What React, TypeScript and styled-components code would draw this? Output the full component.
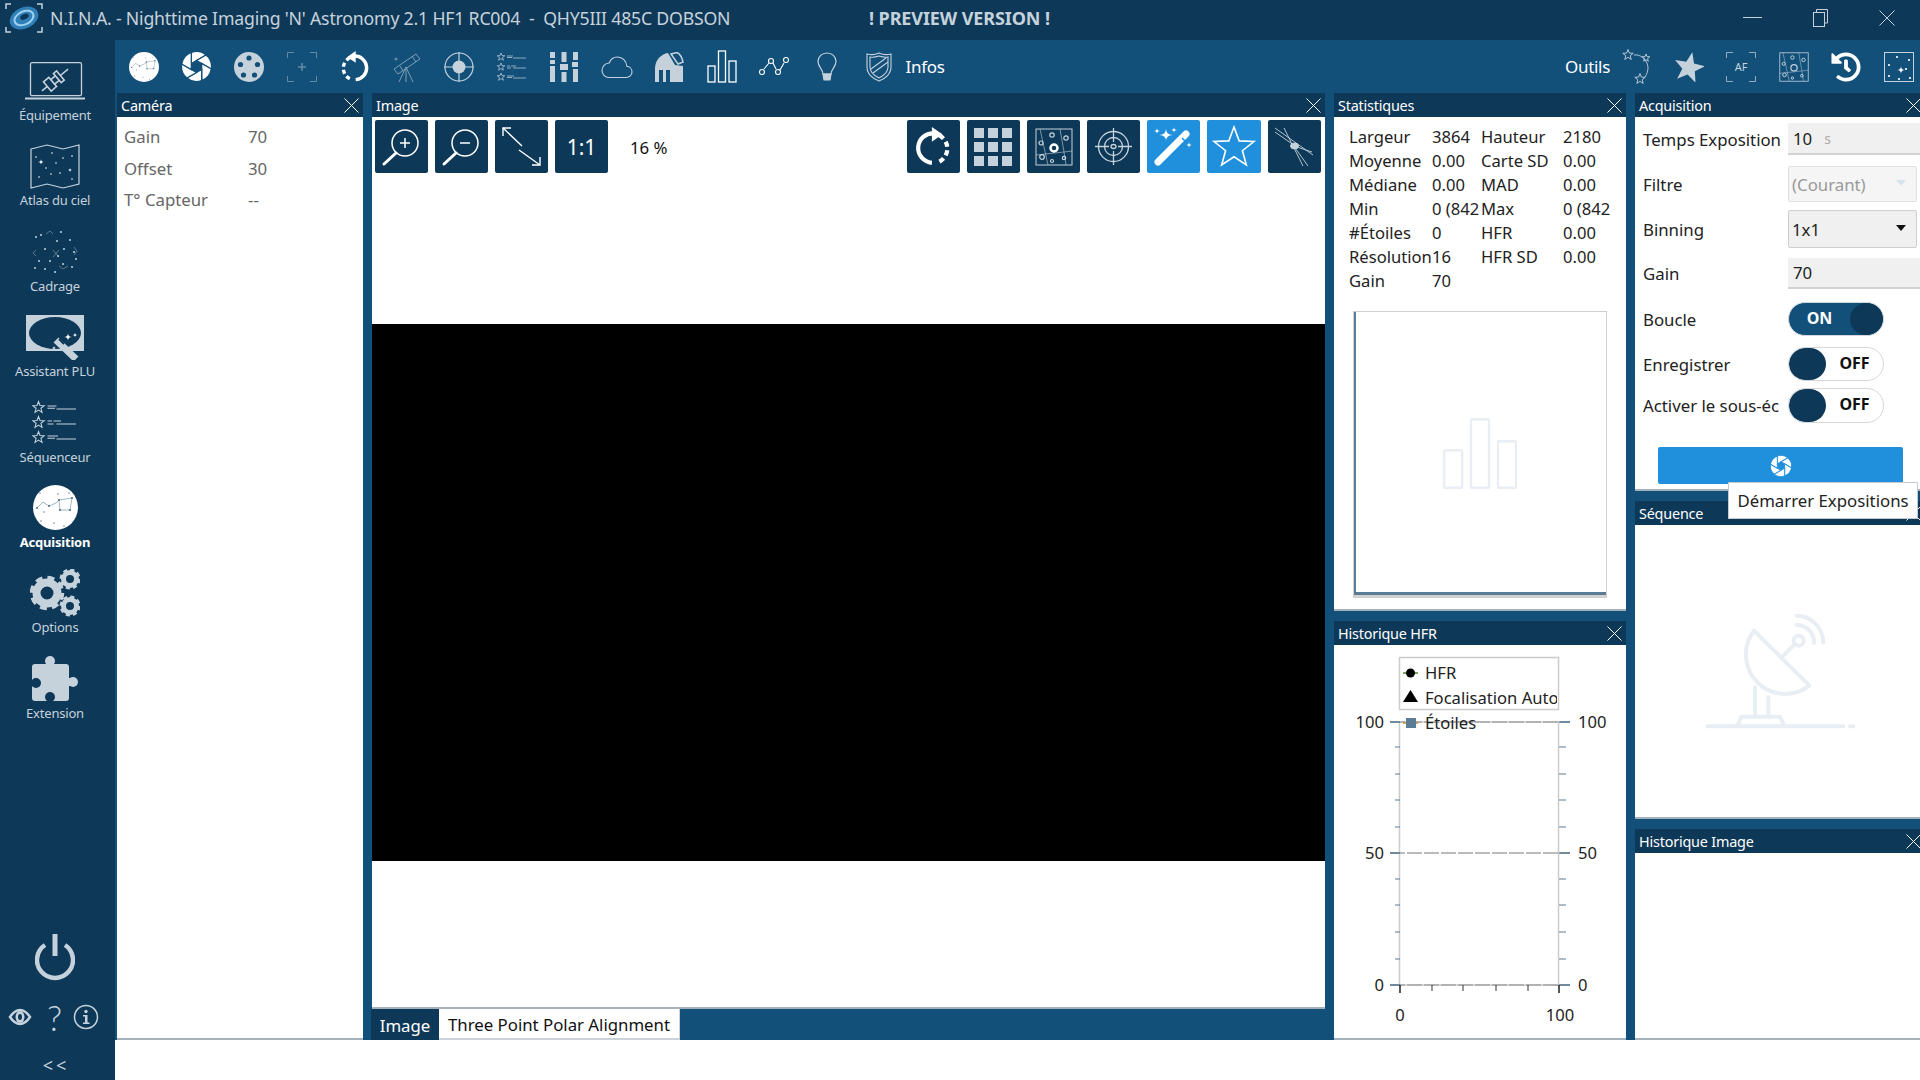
import React from 'react';
import styled, { createGlobalStyle } from 'styled-components';
import { FaHistory } from 'react-icons/fa';

const DARK = '#0e3857';
const MID = '#12507a';
const ACTIVE = '#2090dd';
const ICON = '#c5d2dc';
const FAINT = '#e8eef3';

const GlobalStyle = createGlobalStyle`
  html, body {
    margin: 0;
    padding: 0;
    background: #fff;
    overflow: hidden;
  }
  * {
    box-sizing: border-box;
  }
  body {
    font-family: "Noto Sans", "Open Sans", sans-serif;
  }
`;

const Page = styled.div`
  width: 1920px;
  height: 1080px;
  overflow: hidden;
  display: grid;
  grid-template-rows: 40px 1040px;
`;

const TitleBar = styled.header`
  background: ${DARK};
  display: flex;
  align-items: center;
  color: ${ICON};
  padding: 0 0 5px 5px;
`;

const AppTitle = styled.div`
  width: 819px;
  margin-left: 7px;
  font-size: 17.7px;
  white-space: pre;
  letter-spacing: -0.2px;
`;

const Preview = styled.div`
  font-size: 18px;
  font-weight: 700;
  letter-spacing: -0.1px;
`;

const WindowButtons = styled.div`
  margin-left: auto;
  display: flex;
  padding-right: 25px;
  gap: 51px;
  align-items: center;
`;

const Main = styled.div`
  display: grid;
  grid-template-columns: 115px 1805px;
`;

const Sidebar = styled.nav`
  background: ${DARK};
  padding: 18px 5px 0 0;
  display: flex;
  flex-direction: column;
  align-items: center;
`;

const NavItem = styled.div`
  height: 85.4px;
  width: 100%;
  display: flex;
  flex-direction: column;
  align-items: center;
`;

const NavIcon = styled.div`
  height: 46px;
  display: flex;
  align-items: center;
  justify-content: center;
  color: ${ICON};
`;

const NavLabel = styled.div<{ $active?: boolean }>`
  font-size: 13px;
  line-height: 20px;
  letter-spacing: -0.2px;
  padding-top: 1px;
  color: ${(p) => (p.$active ? '#fff' : ICON)};
  font-weight: ${(p) => (p.$active ? 700 : 400)};
`;

const SideBottom = styled.div`
  margin-top: auto;
  width: 100%;
  display: flex;
  flex-direction: column;
  align-items: center;
  color: ${ICON};
`;

const PowerWrap = styled.div`
  height: 48px;
  margin-bottom: 21px;
`;

const HelpRow = styled.div`
  display: flex;
  width: 110px;
  padding-left: 8px;
  align-items: center;
  height: 30px;
`;

const Question = styled.span`
  font-family: "Lato", "Noto Sans", sans-serif;
  font-size: 35px;
  line-height: 30px;
  font-weight: 300;
  margin: 0 11px 0 15px;
  color: ${ICON};
`;

const Collapse = styled.div`
  height: 29px;
  margin-top: 19px;
  padding-left: 2px;
  font-size: 18px;
  line-height: 28px;
  letter-spacing: 3px;
  color: ${ICON};
`;

const Workspace = styled.div`
  display: grid;
  grid-template-rows: 53px 947px 40px;
  background: ${MID};
`;

const Toolbar = styled.div`
  display: flex;
  align-items: center;
  padding-left: 3px;
  margin-right: -5px;
`;

const ToolButton = styled.div`
  width: 52.5px;
  height: 53px;
  flex: none;
  display: flex;
  align-items: center;
  justify-content: center;
  color: ${ICON};
`;

const ToolText = styled.span`
  color: #fff;
  font-size: 17px;
  letter-spacing: -0.3px;
`;

const Spacer = styled.div`
  flex: 1;
`;

const Dock = styled.div`
  display: flex;
  gap: 9px;
  padding-left: 2px;
  overflow: hidden;
`;

const DockStack = styled.div<{ $width: number }>`
  width: ${(p) => p.$width}px;
  flex: none;
  display: flex;
  flex-direction: column;
  gap: 10px;
`;

const Panel = styled.section<{ $height?: number; $width?: number }>`
  display: flex;
  flex-direction: column;
  flex: ${(p) => (p.$height || p.$width ? 'none' : '1')};
  height: ${(p) => (p.$height ? `${p.$height}px` : 'auto')};
  width: ${(p) => (p.$width ? `${p.$width}px` : 'auto')};
  min-height: 0;
`;

const PanelHeader = styled.div`
  height: 24px;
  flex: none;
  background: ${DARK};
  color: #fff;
  font-size: 14.4px;
  letter-spacing: -0.2px;
  display: flex;
  align-items: center;
  justify-content: space-between;
  padding: 0 4px 0 4px;
`;

const PanelBody = styled.div`
  flex: 1;
  min-height: 0;
  background: #fff;
  border-bottom: 2px solid #a3b2bd;
  position: relative;
  display: flex;
  flex-direction: column;
`;

const EmptyBody = styled(PanelBody)`
  align-items: center;
  justify-content: center;
`;

const CameraRow = styled.div`
  display: grid;
  grid-template-columns: 124px 1fr;
  height: 31.5px;
  align-items: center;
  padding-left: 7px;
  font-size: 16.8px;
  color: #666;
`;

const CameraList = styled.div`
  padding-top: 4px;
`;

const ImageTools = styled.div`
  height: 60px;
  flex: none;
  display: flex;
  align-items: flex-start;
  padding: 3px 4px 0 3px;
  gap: 7px;
`;

const ImageButton = styled.div<{ $active?: boolean; $width?: number }>`
  width: ${(p) => p.$width ?? 53}px;
  height: 53px;
  flex: none;
  border-radius: 2px;
  background: ${(p) => (p.$active ? ACTIVE : DARK)};
  display: flex;
  align-items: center;
  justify-content: center;
  color: #fff;
  font-size: 21px;
`;

const ZoomLevel = styled.div`
  margin-left: 15px;
  height: 53px;
  display: flex;
  align-items: center;
  font-size: 16.8px;
  color: #111;
  margin-top: 1px;
  white-space: nowrap;
`;

const ImageArea = styled.div`
  flex: 1;
  display: flex;
  align-items: center;
`;

const BlackFrame = styled.div`
  width: 100%;
  height: 537px;
  background: #000;
`;

const Tabs = styled.div`
  height: 31px;
  flex: none;
  display: flex;
  background: ${MID};
`;

const Tab = styled.div<{ $active?: boolean }>`
  width: ${(p) => (p.$active ? '68px' : '241px')};
  margin-left: ${(p) => (p.$active ? '-1px' : '0')};
  padding-top: 2px;
  display: flex;
  align-items: center;
  justify-content: center;
  white-space: nowrap;
  font-size: 16.8px;
  background: ${(p) => (p.$active ? DARK : '#fff')};
  color: ${(p) => (p.$active ? '#fff' : '#111')};
  border-bottom: ${(p) => (p.$active ? 'none' : '2px solid #ccd3d8')};
  border-right: ${(p) => (p.$active ? 'none' : '1px solid #ccd3d8')};
`;

const StatsGrid = styled.div`
  display: grid;
  grid-template-columns: 83px 49px 82px 49px;
  grid-auto-rows: 24px;
  padding: 8px 0 0 15px;
  font-size: 16.6px;
  color: #222;
  align-items: center;
`;

const StatCell = styled.div`
  white-space: nowrap;
  overflow: hidden;
  line-height: 24px;
`;

const HistogramBox = styled.div`
  margin: 18px 0 0 19px;
  width: 254px;
  height: 287px;
  border: 1.5px solid #d0d0d0;
  border-bottom-width: 3px;
  display: flex;
  align-items: center;
  justify-content: center;
  box-shadow: inset 2px -3px 0 #5a7c94;
`;

const AcquisitionForm = styled.div`
  padding-left: 8px;
`;

const FormRow = styled.div<{ $height: number; $top: number }>`
  display: grid;
  grid-template-columns: 145px 132px;
  align-items: center;
  height: ${(p) => p.$height}px;
  margin-top: ${(p) => p.$top}px;
  font-size: 16.8px;
  color: #222;
`;

const FormLabel = styled.div`
  white-space: nowrap;
  width: 137px;
`;

const TextField = styled.div`
  height: 100%;
  width: 140px;
  background: #f0f0f0;
  border-bottom: 2px solid #d2d2d2;
  display: flex;
  align-items: center;
  padding-left: 5px;
  gap: 12px;
`;

const Unit = styled.span`
  color: #aaa;
  font-size: 14px;
`;

const ComboBox = styled.div<{ $disabled?: boolean }>`
  height: 100%;
  width: 129px;
  background: ${(p) => (p.$disabled ? '#f5f5f5' : '#f0f0f0')};
  border: 1.5px solid ${(p) => (p.$disabled ? '#e0e0e0' : '#cfcfcf')};
  border-radius: 2px;
  display: flex;
  align-items: center;
  justify-content: space-between;
  padding: 0 10px 0 3px;
  color: ${(p) => (p.$disabled ? '#999' : '#222')};
`;

const ComboArrow = styled.span<{ $disabled?: boolean }>`
  width: 0;
  height: 0;
  border-left: 5.5px solid transparent;
  border-right: 5.5px solid transparent;
  border-top: 6px solid ${(p) => (p.$disabled ? '#d6e4ee' : '#111')};
  margin-bottom: 3px;
`;

const Toggle = styled.div<{ $on?: boolean }>`
  width: 96px;
  height: 100%;
  border-radius: 17px;
  background: ${(p) => (p.$on ? MID : '#fff')};
  border: 1.5px solid #d4d8db;
  display: flex;
  flex-direction: ${(p) => (p.$on ? 'row' : 'row-reverse')};
  align-items: stretch;
  justify-content: space-between;
  overflow: hidden;
`;

const ToggleKnob = styled.div<{ $on?: boolean }>`
  width: ${(p) => (p.$on ? 33 : 37)}px;
  background: ${DARK};
  border-radius: 17px;
`;

const ToggleText = styled.div<{ $on?: boolean }>`
  flex: 1;
  display: flex;
  align-items: center;
  justify-content: center;
  font-size: 16px;
  font-weight: 700;
  margin-bottom: 3px;
  color: ${(p) => (p.$on ? '#fff' : '#111')};
`;

const StartButton = styled.div`
  width: 245px;
  height: 37px;
  margin: 24px 0 0 15px;
  background: ${ACTIVE};
  border-radius: 2px;
  display: flex;
  align-items: center;
  justify-content: center;
`;

const Tooltip = styled.div`
  position: absolute;
  left: 93px;
  top: 365px;
  width: 190px;
  height: 37px;
  z-index: 3;
  background: #fff;
  border: 1.5px solid #c4ccd2;
  display: flex;
  align-items: center;
  justify-content: center;
  font-size: 16.8px;
  color: #222;
  white-space: nowrap;
`;

const BottomStrip = styled.div`
  background: #fff;
`;

const starPoints = (cx: number, cy: number, r: number): string => {
  const pts: string[] = [];
  for (let i = 0; i < 10; i++) {
    const rad = i % 2 === 0 ? r : r * 0.42;
    const a = (Math.PI / 5) * i - Math.PI / 2;
    pts.push(`${(cx + rad * Math.cos(a)).toFixed(2)},${(cy + rad * Math.sin(a)).toFixed(2)}`);
  }
  return pts.join(' ');
};

const sparkle = (cx: number, cy: number, r: number): string =>
  `M${cx} ${cy - r}Q${cx} ${cy} ${cx + r} ${cy}Q${cx} ${cy} ${cx} ${cy + r}Q${cx} ${cy} ${cx - r} ${cy}Q${cx} ${cy} ${cx} ${cy - r}Z`;

const CloseX = () => (
  <svg width="15" height="15" viewBox="0 0 15 15">
    <path d="M0.5 0.5L14.5 14.5M14.5 0.5L0.5 14.5" stroke="#fff" strokeWidth="1" />
  </svg>
);

const Logo = () => (
  <svg width="38" height="30" viewBox="0 0 38 30">
    <path d="M1 6V1H6M32 1H37V6M37 24V29H32M6 29H1V24" fill="none" stroke={ICON} strokeWidth="1.5" />
    <g transform="rotate(-25 19 15)">
      <ellipse cx="19" cy="15" rx="15" ry="10.5" fill="#2f7fb8" />
      <ellipse cx="19" cy="15" rx="10" ry="6.5" fill="none" stroke="#9fd0f0" strokeWidth="2" />
      <ellipse cx="20" cy="14" rx="4.5" ry="2.6" fill={DARK} />
    </g>
  </svg>
);

const SkyDisc = ({ size }: { size: number }) => (
  <svg width={size} height={size} viewBox="0 0 45 45">
    <circle cx="22.5" cy="22.5" r="22.5" fill="#fff" />
    <path d="M4 23L10 17L16 21L23 18L26 15L39 13M26 15L27 25L37 25L39 13" fill="none" stroke="#8aa3b5" strokeWidth="0.8" />
    <g fill="#4a6b84">
      <circle cx="7" cy="8" r="0.7" />
      <circle cx="25" cy="9" r="0.7" />
      <circle cx="36" cy="8" r="0.7" />
      <circle cx="11" cy="27" r="0.7" />
      <circle cx="8" cy="36" r="0.7" />
      <circle cx="21" cy="38" r="0.7" />
      <circle cx="31" cy="41" r="0.7" />
      <circle cx="4" cy="23" r="1" />
      <circle cx="16" cy="21" r="1" />
      <circle cx="26" cy="15" r="1" />
      <circle cx="39" cy="13" r="1" />
      <circle cx="27" cy="25" r="1" />
      <circle cx="37" cy="25" r="1" />
    </g>
  </svg>
);

const Shutter = ({ size, gap }: { size: number; gap: string }) => (
  <svg width={size} height={size} viewBox="-15.5 -15.5 31 31">
    {[0, 60, 120, 180, 240, 300].map((a) => (
      <path
        key={a}
        transform={`rotate(${a})`}
        d="M-5.2 -3L0 -6L9.6 -11.5A15 15 0 0 0 -5.16 -14.06Z"
        fill="#fff"
        stroke={gap}
        strokeWidth="1.3"
      />
    ))}
  </svg>
);

const FilterWheel = () => (
  <svg width="30" height="30" viewBox="0 0 30 30">
    <circle cx="15" cy="15" r="15" fill={ICON} />
    {[
      [15, 6],
      [6.5, 12.5],
      [23.5, 12.5],
      [9.5, 23],
      [20.5, 23],
    ].map(([x, y]) => (
      <circle key={x} cx={x} cy={y} r="2.6" fill={MID} />
    ))}
  </svg>
);

const FocusFrame = () => (
  <svg width="30" height="30" viewBox="0 0 30 30" opacity="0.45">
    <path d="M0.5 6V0.5H7M23 0.5H29.5V6M29.5 24V29.5H23M7 29.5H0.5V24" fill="none" stroke={ICON} />
    <path d="M15 11V19M11 15H19" stroke={ICON} strokeWidth="1.5" />
  </svg>
);

const RotateArrow = ({ size, color, mirror }: { size: number; color: string; mirror?: boolean }) => (
  <svg width={size} height={size} viewBox="0 0 38 38" style={mirror ? { transform: 'scaleX(-1)' } : undefined}>
    <path d="M19 6A14 14 0 0 0 17 34" fill="none" stroke={color} strokeWidth="4" />
    <path d="M17 0L27 7L17 14Z" fill={color} />
    <path d="M24 8A14 14 0 0 1 24 33" fill="none" stroke={color} strokeWidth="4" strokeDasharray="5 3.5" />
  </svg>
);

const TelescopeIcon = () => (
  <svg width="30" height="32" viewBox="0 0 30 32" opacity="0.6">
    <path d="M2 18L24 3L28 8L6 23Z" fill="none" stroke={ICON} />
    <path d="M20 5L24 11M8 15L11 20" stroke={ICON} />
    <path d="M14 16L7 31M14 16L14 31M14 16L21 31" fill="none" stroke={ICON} />
    <path d={sparkle(4, 8, 2.5)} fill={ICON} />
  </svg>
);

const GuiderIcon = () => (
  <svg width="30" height="30" viewBox="0 0 30 30">
    <circle cx="15" cy="15" r="14" fill="none" stroke={ICON} strokeWidth="1.2" />
    <path d="M15 0V30M0 15H30" stroke={ICON} strokeWidth="1.2" />
    <circle cx="15" cy="15" r="6.5" fill={ICON} />
  </svg>
);

const SequenceIcon = ({ width, height }: { width: number; height: number }) => (
  <svg width={width} height={height} viewBox="0 0 30 30">
    {[5, 15, 25].map((y) => (
      <polygon key={y} points={starPoints(4, y, 4)} fill="none" stroke={ICON} strokeWidth="0.7" />
    ))}
    <path d="M10 4H16M10 5.5H15M16 6H29M10 14H13M14 14H19M10 16H14M16 16H29M10 24H17M10 25.5H15M16 26H29" stroke={ICON} strokeWidth="0.7" />
  </svg>
);

const MixerIcon = () => (
  <svg width="28" height="30" viewBox="0 0 28 30" fill={ICON}>
    <rect x="0" y="0" width="5" height="6" />
    <rect x="0" y="8" width="5" height="4" />
    <rect x="-0" y="14" width="5" height="16" />
    <rect x="11.5" y="0" width="5" height="10" />
    <rect x="10" y="12" width="8" height="6" />
    <rect x="11.5" y="20" width="5" height="10" />
    <rect x="23" y="0" width="5" height="8" />
    <rect x="22" y="10" width="7" height="5" />
    <rect x="23" y="17" width="5" height="13" />
  </svg>
);

const CloudIcon = () => (
  <svg width="32" height="24" viewBox="0 0 32 24">
    <path
      d="M8 22.5H25C28.5 22.5 31 20 31 17C31 14 28.8 11.5 25.8 11.3C25.5 6 21.5 2 16.5 2C12.5 2 9.5 4.5 8.2 8C4 8.2 1 11.5 1 15.3C1 19.3 4 22.5 8 22.5Z"
      fill="none"
      stroke={ICON}
      strokeWidth="1.1"
    />
  </svg>
);

const DomeIcon = () => (
  <svg width="30" height="30" viewBox="0 0 30 30">
    <path d="M1 30V17C1 8 7 2 14 1L21 13L29 14V30Z" fill={ICON} />
    <path d="M17 2L23 0.5C26 2 28 5 29 10L24 12Z" fill="none" stroke={ICON} strokeWidth="1.5" />
    <rect x="5" y="18" width="11" height="12" fill={MID} />
    <rect x="9" y="18" width="3" height="12" fill={ICON} />
  </svg>
);

const BarsIcon = ({ color, strokeWidth }: { color: string; strokeWidth: number }) => (
  <svg width="30" height="33" viewBox="0 0 30 33" fill="none" stroke={color} strokeWidth={strokeWidth}>
    <rect x="1" y="16" width="7" height="16" />
    <rect x="11.5" y="1" width="7" height="31" />
    <rect x="22" y="11" width="7" height="21" />
  </svg>
);

const TrendIcon = () => (
  <svg width="30" height="22" viewBox="0 0 30 22" fill="none" stroke="#fff" strokeWidth="1.1">
    <path d="M5 13L10 7M14 7L17 13M21 14L25 7" />
    <circle cx="3" cy="16" r="2.5" />
    <circle cx="12" cy="5" r="2.5" />
    <circle cx="19" cy="16" r="2.5" />
    <circle cx="27" cy="4" r="2.5" />
  </svg>
);

const BulbIcon = () => (
  <svg width="20" height="30" viewBox="0 0 20 30" fill="none" stroke={ICON} strokeWidth="1.2">
    <path d="M6 22C6 17 1 15 1 9.5C1 4.5 5 1 10 1C15 1 19 4.5 19 9.5C19 15 14 17 14 22Z" />
    <path d="M6 22H14L13 28H7Z" fill={ICON} />
  </svg>
);

const ShieldIcon = () => (
  <svg width="26" height="30" viewBox="0 0 26 30" fill="none" stroke={ICON} strokeWidth="1.1">
    <path d="M13 1C17 3 21 3 25 2V15C25 22 19 27 13 29C7 27 1 22 1 15V2C5 3 9 3 13 1Z" />
    <path d="M4 5C7 5.5 10 5 13 4C16 5 19 5.5 22 5V15C22 20 17 24 13 26C9 24 4 20 4 15Z" />
    <path d="M5 17L20 6M7 21L22 10" />
  </svg>
);

const StarCurve = () => (
  <svg width="28" height="36" viewBox="0 0 28 36" fill="none" stroke={ICON} strokeWidth="0.9">
    <polygon points={starPoints(6, 6, 5.5)} />
    <polygon points={starPoints(24, 9, 4)} />
    <polygon points={starPoints(18, 30, 5.5)} />
    <path d="M12 6C18 5 25 10 26 18C26 22 25 25 23 28" />
  </svg>
);

const FilledStar = () => (
  <svg width="30" height="30" viewBox="0 0 30 30">
    <polygon points={starPoints(15, 16, 16)} fill={ICON} transform="rotate(12 15 16)" />
  </svg>
);

const AfFrame = () => (
  <svg width="30" height="30" viewBox="0 0 30 30">
    <path d="M0.5 6V0.5H7M23 0.5H29.5V6M29.5 24V29.5H23M7 29.5H0.5V24" fill="none" stroke={ICON} strokeWidth="0.9" opacity="0.8" />
    <text x="15" y="19" textAnchor="middle" fontSize="11" fontFamily="Noto Sans, sans-serif" fill={ICON}>
      AF
    </text>
  </svg>
);

const StarMap = ({ size, bold }: { size: number; bold?: boolean }) => (
  <svg width={size} height={size} viewBox="0 0 38 38" fill="none" stroke={ICON} strokeWidth="1">
    <rect x="1" y="1" width="36" height="36" />
    <path d="M25 1L29 24L37 23M1 27L29 24L31 37M5 1L13 37" strokeWidth="0.6" />
    <circle cx="19" cy="20" r={bold ? 3.5 : 4} strokeWidth={bold ? 2.5 : 1.5} stroke={bold ? '#fff' : ICON} />
    <circle cx="17" cy="7" r="2.2" strokeWidth="1.2" />
    <circle cx="31" cy="10" r="2.2" strokeWidth="1.2" />
    <circle cx="6" cy="15" r="2" strokeWidth="1.2" />
    <circle cx="7" cy="29" r="2.3" strokeWidth="1.2" />
    <circle cx="29" cy="30" r="1.7" strokeWidth="1.2" />
    <circle cx="17" cy="33" r="1.5" strokeWidth="1.2" />
  </svg>
);

const StarField = () => (
  <svg width="30" height="30" viewBox="0 0 30 30">
    <rect x="0.5" y="0.5" width="29" height="29" fill="none" stroke={ICON} />
    <path d={sparkle(17, 18, 4)} fill="#fff" />
    {[
      [13, 5],
      [25, 8],
      [5, 13],
      [5, 24],
      [15, 27],
      [26, 26],
      [22, 17],
    ].map(([x, y]) => (
      <circle key={`${x}${y}`} cx={x} cy={y} r="1.1" fill="#fff" />
    ))}
  </svg>
);

const Magnifier = ({ plus }: { plus?: boolean }) => (
  <svg width="53" height="53" viewBox="0 0 53 53" fill="none" stroke="#fff">
    <circle cx="30" cy="23" r="13" strokeWidth="1.5" />
    <path d="M21 33L9 44" strokeWidth="3" strokeLinecap="round" />
    <path d={plus ? 'M25 23H35M30 18V28' : 'M25 23H35'} strokeWidth="1.5" />
  </svg>
);

const FitArrows = () => (
  <svg width="53" height="53" viewBox="0 0 53 53" fill="none" stroke="#fff" strokeWidth="1.4">
    <path d="M8 8L27 26M24 30L45 45" />
    <path d="M8 16V8H16M37 45H45V37" />
  </svg>
);

const GridSquares = () => (
  <svg width="53" height="53" viewBox="0 0 53 53" fill={ICON}>
    {[8, 22, 36].map((y) =>
      [7, 21, 35].map((x) => <rect key={`${x}-${y}`} x={x} y={y} width="10" height="10" />),
    )}
  </svg>
);

const Crosshair = () => (
  <svg width="53" height="53" viewBox="0 0 53 53" fill="none" stroke={ICON} strokeWidth="1.3">
    <circle cx="26.5" cy="26.5" r="15" />
    <circle cx="26.5" cy="26.5" r="9" />
    <ellipse cx="26.5" cy="26.5" rx="2.5" ry="2" />
    <path d="M26.5 8V22M26.5 31V45M8 26.5H22M31 26.5H45" />
  </svg>
);

const Wand = () => (
  <svg width="53" height="53" viewBox="0 0 53 53">
    <path d="M11 42L39 14" stroke="#fff" strokeWidth="7" strokeLinecap="round" />
    <path d="M35 18L38 21" stroke={ACTIVE} strokeWidth="1.5" />
    <g fill="#fff">
      <path d={sparkle(19, 15, 6.5)} />
      <path d={sparkle(10, 11, 3.2)} />
      <path d={sparkle(27, 10, 3)} />
      <path d={sparkle(42, 25, 3)} />
    </g>
  </svg>
);

const OutlineStar = () => (
  <svg width="54" height="53" viewBox="0 0 54 53">
    <polygon points={starPoints(27, 28, 21)} fill="none" stroke="#fff" strokeWidth="1.6" />
  </svg>
);

const DiffractionIcon = () => (
  <svg width="53" height="53" viewBox="0 0 53 53" fill="none" stroke={ICON} strokeWidth="0.9">
    <path d="M7 8L45 35M16 8L35 46M7 12L30 28M26 26L44 32M25 25L40 46" />
    <ellipse cx="26.5" cy="26" rx="4" ry="3" fill={ICON} />
  </svg>
);

const LaptopPlug = () => (
  <svg width="60" height="38" viewBox="0 0 60 38" fill="none" stroke={ICON}>
    <rect x="5.5" y="0.7" width="51" height="33" rx="1.5" strokeWidth="1.3" />
    <path d="M0 36.5H60" strokeWidth="1.8" />
    <g transform="rotate(-40 30 18)" strokeWidth="1.6">
      <path d="M13 18H20M37 18H47" />
      <path d="M20 12H27V24H20Z" />
      <path d="M33 12H37V24H33Z" />
      <path d="M27 15H33M27 21H33" />
    </g>
  </svg>
);

const SkyMap = () => (
  <svg width="50" height="45" viewBox="0 0 50 45">
    <path d="M1 5L17 1L33 5L49 1V40L33 44L17 40L1 44Z" fill="none" stroke={ICON} strokeWidth="1.2" />
    <g fill="#fff">
      <path d={sparkle(11, 18, 3)} />
      <path d={sparkle(40, 26, 2)} />
      {[
        [6, 13],
        [22, 9],
        [33, 14],
        [42, 12],
        [26, 19],
        [9, 33],
        [21, 30],
        [30, 29],
        [42, 35],
        [16, 24],
      ].map(([x, y]) => (
        <circle key={`${x}${y}`} cx={x} cy={y} r="0.8" />
      ))}
    </g>
  </svg>
);

const Framing = () => (
  <svg width="46" height="44" viewBox="0 0 46 44">
    <g fill={ICON}>
      {[
        [9, 5],
        [29, 2],
        [38, 10],
        [4, 7],
        [25, 11],
        [13, 19],
        [32, 19],
        [44, 29],
        [7, 31],
        [18, 31],
        [26, 26],
        [13, 39],
        [31, 34],
        [40, 37],
        [3, 38],
        [42, 22],
        [23, 42],
      ].map(([x, y]) => (
        <circle key={`${x}${y}`} cx={x} cy={y} r="1" />
      ))}
    </g>
    <path
      d="M14 4L18 1L21 4M4 20L1 23L4 26M42 17L45 21L42 25M27 36L31 39L36 36M21 20L27 27M27 20L21 27"
      fill="none"
      stroke={ICON}
      strokeWidth="0.6"
      opacity="0.7"
    />
  </svg>
);

const PlateSolve = () => (
  <svg width="58" height="45" viewBox="0 0 58 45">
    <rect x="0" y="0" width="58" height="36" fill={ICON} />
    <ellipse cx="29" cy="18" rx="26" ry="16" fill={DARK} />
    <path d="M30 25L50 44" stroke={ICON} strokeWidth="7" />
    <path d="M33 24L38 29" stroke={DARK} strokeWidth="2" />
    <g fill="#fff">
      <path d={sparkle(42, 22, 4)} />
      <path d={sparkle(49, 20, 2.5)} />
      <path d={sparkle(28, 33, 2)} />
    </g>
  </svg>
);

const GearCluster = () => (
  <svg width="50" height="48" viewBox="0 0 50 48" fill="none" stroke={ICON}>
    <circle cx="17" cy="24" r="10.5" strokeWidth="8" />
    <circle cx="17" cy="24" r="15" strokeWidth="4.5" strokeDasharray="6.8 4.98" />
    <circle cx="40" cy="10" r="6.5" strokeWidth="5" />
    <circle cx="40" cy="10" r="9" strokeWidth="3" strokeDasharray="4 3.07" />
    <circle cx="40" cy="37" r="6.5" strokeWidth="5" />
    <circle cx="40" cy="37" r="9" strokeWidth="3" strokeDasharray="4 3.07" />
  </svg>
);

const PuzzlePiece = () => (
  <svg width="46" height="46" viewBox="0 0 46 46">
    <g fill={ICON}>
      <rect x="0" y="8" width="37" height="37" rx="3" />
      <circle cx="18" cy="5" r="5" />
      <rect x="14" y="6" width="8" height="4" />
      <circle cx="41" cy="26" r="5" />
      <rect x="35" y="22" width="4" height="8" />
    </g>
    <g fill={DARK}>
      <circle cx="18" cy="41" r="5" />
      <rect x="15" y="41" width="6" height="5" />
      <circle cx="4" cy="27" r="5" />
      <rect x="-1" y="24" width="5" height="6" />
    </g>
  </svg>
);

const PowerIcon = () => (
  <svg width="40" height="48" viewBox="0 0 40 48" fill="none" stroke={ICON}>
    <path d="M10 12A18 18 0 1 0 30 12" strokeWidth="4.5" />
    <path d="M20 1V23" strokeWidth="5" />
  </svg>
);

const EyeIcon = () => (
  <svg width="24" height="18" viewBox="0 0 24 18">
    <path d="M12 2C17 2 20 6 22 9C20 12 17 16 12 16C7 16 4 12 2 9C4 6 7 2 12 2Z" fill="none" stroke={ICON} strokeWidth="2.5" />
    <ellipse cx="12" cy="9" rx="4.5" ry="6" fill={ICON} />
    <ellipse cx="12" cy="9" rx="2" ry="3" fill={DARK} />
  </svg>
);

const InfoIcon = () => (
  <svg width="26" height="26" viewBox="0 0 26 26">
    <circle cx="13" cy="13" r="11.5" fill="none" stroke={ICON} strokeWidth="1.5" />
    <circle cx="13" cy="7.5" r="1.7" fill={ICON} />
    <path d="M10 11H14.5V18.5H16.5V20H10V18.5H12V12.5H10Z" fill={ICON} />
  </svg>
);

const Minimize = () => (
  <svg width="19" height="2" viewBox="0 0 19 2">
    <rect width="19" height="1" fill={ICON} />
  </svg>
);

const Restore = () => (
  <svg width="15" height="18" viewBox="0 0 15 18" fill="none" stroke={ICON}>
    <rect x="0.5" y="3.5" width="11" height="14" />
    <path d="M3.5 3V0.5H14.5V14H12" />
  </svg>
);

const DishIcon = () => (
  <svg width="150" height="115" viewBox="255 70 450 345" fill="none" stroke={FAINT} strokeWidth="12" strokeLinecap="round" strokeLinejoin="round">
    <path d="M402 120A118 118 0 0 0 568 285Z" />
    <path d="M490 195L522 163" />
    <circle cx="536" cy="150" r="15" />
    <path d="M530 103A52 52 0 0 1 582 157M530 75A82 82 0 0 1 610 155" />
    <path d="M405 290V372M445 320V372M352 405L365 378H480L492 405" />
    <path d="M262 407H670M690 407H700" />
  </svg>
);

const EmptyBars = () => (
  <svg width="74" height="71" viewBox="0 0 74 71" fill="none" stroke={FAINT} strokeWidth="2.4">
    <rect x="1.2" y="32.2" width="18" height="37.6" rx="1" />
    <rect x="28" y="1.2" width="18" height="68.6" rx="1" />
    <rect x="55" y="23.2" width="18" height="46.6" rx="1" />
  </svg>
);

// plot area is x 66..225, y 77..340 inside the panel body
const HfrChart = () => {
  const minor = [102, 129, 155, 182, 234, 260, 287, 314];
  const labelStyle = { fontSize: 16.6, fontFamily: '"Noto Sans", sans-serif', fill: '#222' };
  return (
    <svg width="292" height="392" viewBox="0 0 292 392">
      <defs>
        <clipPath id="legendClip">
          <rect x="66" y="12" width="157" height="52" />
        </clipPath>
      </defs>
      <rect x="65.5" y="77" width="159" height="263" fill="none" stroke="#ccc" strokeWidth="1.5" />
      <path d="M56 77H236M56 208H236M56 340H236" stroke="#a5a5a5" strokeWidth="1.3" strokeDasharray="15 2" />
      <path d="M56 77H66M225 77H236M56 208H66M225 208H236M56 340H66M225 340H236" stroke="#5a7c94" strokeWidth="1.3" />
      {minor.map((y) => (
        <path key={y} d={`M61 ${y}H66M225 ${y}H232`} stroke="#5a7c94" strokeWidth="1" />
      ))}
      <path d="M66 340V348M225 340V348" stroke="#111" strokeWidth="1.4" />
      <path d="M98 340V346M129 340V346M162 340V346M194 340V346" stroke="#333" strokeWidth="1" />
      <rect x="65.5" y="12.5" width="159" height="52" fill="#fff" stroke="#ccc" strokeWidth="1.5" />
      <path d="M69 28H84" stroke="#4a8a10" strokeWidth="1.5" />
      <circle cx="76.5" cy="28" r="4.5" fill="#000" />
      <path d="M69 57L76.5 45L84 57Z" fill="#000" />
      <path d="M69 78H84" stroke="#c88a20" strokeWidth="1.5" />
      <rect x="72" y="73" width="10" height="10" fill="#5a7c94" />
      <g style={labelStyle}>
        <text x="91" y="34">HFR</text>
        <text x="91" y="59" clipPath="url(#legendClip)">Focalisation Auto</text>
        <text x="91" y="84">Étoiles</text>
        <text x="50" y="83" textAnchor="end">100</text>
        <text x="50" y="214" textAnchor="end">50</text>
        <text x="50" y="346" textAnchor="end">0</text>
        <text x="244" y="83">100</text>
        <text x="244" y="214">50</text>
        <text x="244" y="346">0</text>
        <text x="66" y="376" textAnchor="middle">0</text>
        <text x="226" y="376" textAnchor="middle">100</text>
      </g>
    </svg>
  );
};

const navItems: { label: string; icon: React.ReactNode; active?: boolean }[] = [
  { label: 'Équipement', icon: <LaptopPlug /> },
  { label: 'Atlas du ciel', icon: <SkyMap /> },
  { label: 'Cadrage', icon: <Framing /> },
  { label: 'Assistant PLU', icon: <PlateSolve /> },
  { label: 'Séquenceur', icon: <SequenceIcon width={46} height={45} /> },
  { label: 'Acquisition', icon: <SkyDisc size={45} />, active: true },
  { label: 'Options', icon: <GearCluster /> },
  { label: 'Extension', icon: <PuzzlePiece /> },
];

const stats = [
  ['Largeur', '3864', 'Hauteur', '2180'],
  ['Moyenne', '0.00', 'Carte SD', '0.00'],
  ['Médiane', '0.00', 'MAD', '0.00'],
  ['Min', '0 (842', 'Max', '0 (842'],
  ['#Étoiles', '0', 'HFR', '0.00'],
  ['Résolution', '16', 'HFR SD', '0.00'],
  ['Gain', '70', '', ''],
];

const App: React.FC = () => (
  <Page>
    <GlobalStyle />
    <TitleBar>
      <Logo />
      <AppTitle>{"N.I.N.A. - Nighttime Imaging 'N' Astronomy 2.1 HF1 RC004  -  QHY5III 485C DOBSON"}</AppTitle>
      <Preview>! PREVIEW VERSION !</Preview>
      <WindowButtons>
        <Minimize />
        <Restore />
        <svg width="16" height="16" viewBox="0 0 16 16">
          <path d="M0.5 0.5L15.5 15.5M15.5 0.5L0.5 15.5" stroke={ICON} />
        </svg>
      </WindowButtons>
    </TitleBar>
    <Main>
      <Sidebar>
        {navItems.map((item) => (
          <NavItem key={item.label}>
            <NavIcon>{item.icon}</NavIcon>
            <NavLabel $active={item.active}>{item.label}</NavLabel>
          </NavItem>
        ))}
        <SideBottom>
          <PowerWrap>
            <PowerIcon />
          </PowerWrap>
          <HelpRow>
            <EyeIcon />
            <Question>?</Question>
            <InfoIcon />
          </HelpRow>
          <Collapse>{'<<'}</Collapse>
        </SideBottom>
      </Sidebar>
      <Workspace>
        <Toolbar>
          <ToolButton><SkyDisc size={30} /></ToolButton>
          <ToolButton><Shutter size={31} gap={MID} /></ToolButton>
          <ToolButton><FilterWheel /></ToolButton>
          <ToolButton><FocusFrame /></ToolButton>
          <ToolButton><RotateArrow size={32} color="#fff" mirror /></ToolButton>
          <ToolButton><TelescopeIcon /></ToolButton>
          <ToolButton><GuiderIcon /></ToolButton>
          <ToolButton><SequenceIcon width={30} height={30} /></ToolButton>
          <ToolButton><MixerIcon /></ToolButton>
          <ToolButton><CloudIcon /></ToolButton>
          <ToolButton><DomeIcon /></ToolButton>
          <ToolButton><BarsIcon color="#fff" strokeWidth={1.3} /></ToolButton>
          <ToolButton><TrendIcon /></ToolButton>
          <ToolButton><BulbIcon /></ToolButton>
          <ToolButton><ShieldIcon /></ToolButton>
          <ToolText>Infos</ToolText>
          <Spacer />
          <ToolText>Outils</ToolText>
          <ToolButton><StarCurve /></ToolButton>
          <ToolButton><FilledStar /></ToolButton>
          <ToolButton><AfFrame /></ToolButton>
          <ToolButton><StarMap size={30} /></ToolButton>
          <ToolButton><FaHistory size={30} color="#fff" /></ToolButton>
          <ToolButton><StarField /></ToolButton>
        </Toolbar>
        <Dock>
          <Panel $width={246}>
            <PanelHeader>
              Caméra
              <CloseX />
            </PanelHeader>
            <PanelBody>
              <CameraList>
                <CameraRow><span>Gain</span><span>70</span></CameraRow>
                <CameraRow><span>Offset</span><span>30</span></CameraRow>
                <CameraRow><span>T° Capteur</span><span>--</span></CameraRow>
              </CameraList>
            </PanelBody>
          </Panel>
          <Panel $width={953}>
            <PanelHeader>
              Image
              <CloseX />
            </PanelHeader>
            <PanelBody>
              <ImageTools>
                <ImageButton><Magnifier plus /></ImageButton>
                <ImageButton><Magnifier /></ImageButton>
                <ImageButton><FitArrows /></ImageButton>
                <ImageButton>1:1</ImageButton>
                <ZoomLevel>16 %</ZoomLevel>
                <Spacer />
                <ImageButton><RotateArrow size={40} color="#fff" /></ImageButton>
                <ImageButton><GridSquares /></ImageButton>
                <ImageButton><StarMap size={38} bold /></ImageButton>
                <ImageButton><Crosshair /></ImageButton>
                <ImageButton $active><Wand /></ImageButton>
                <ImageButton $active $width={54}><OutlineStar /></ImageButton>
                <ImageButton><DiffractionIcon /></ImageButton>
              </ImageTools>
              <ImageArea>
                <BlackFrame />
              </ImageArea>
            </PanelBody>
            <Tabs>
              <Tab $active>Image</Tab>
              <Tab>Three Point Polar Alignment</Tab>
            </Tabs>
          </Panel>
          <DockStack $width={292}>
            <Panel $height={518}>
              <PanelHeader>
                Statistiques
                <CloseX />
              </PanelHeader>
              <PanelBody>
                <StatsGrid>
                  {stats.flat().map((cell, i) => (
                    <StatCell key={i}>{cell}</StatCell>
                  ))}
                </StatsGrid>
                <HistogramBox>
                  <EmptyBars />
                </HistogramBox>
              </PanelBody>
            </Panel>
            <Panel>
              <PanelHeader>
                Historique HFR
                <CloseX />
              </PanelHeader>
              <PanelBody>
                <HfrChart />
              </PanelBody>
            </Panel>
          </DockStack>
          <DockStack $width={290}>
            <Panel $height={398}>
              <PanelHeader>
                Acquisition
                <CloseX />
              </PanelHeader>
              <PanelBody>
                <AcquisitionForm>
                  <FormRow $height={32} $top={6}>
                    <FormLabel>Temps Exposition</FormLabel>
                    <TextField>10 <Unit>s</Unit></TextField>
                  </FormRow>
                  <FormRow $height={36} $top={11}>
                    <FormLabel>Filtre</FormLabel>
                    <ComboBox $disabled>(Courant)<ComboArrow $disabled /></ComboBox>
                  </FormRow>
                  <FormRow $height={38} $top={8}>
                    <FormLabel>Binning</FormLabel>
                    <ComboBox>1x1<ComboArrow /></ComboBox>
                  </FormRow>
                  <FormRow $height={31} $top={10}>
                    <FormLabel>Gain</FormLabel>
                    <TextField>70</TextField>
                  </FormRow>
                  <FormRow $height={34} $top={13}>
                    <FormLabel>Boucle</FormLabel>
                    <Toggle $on><ToggleText $on>ON</ToggleText><ToggleKnob $on /></Toggle>
                  </FormRow>
                  <FormRow $height={34} $top={11}>
                    <FormLabel>Enregistrer</FormLabel>
                    <Toggle><ToggleText>OFF</ToggleText><ToggleKnob /></Toggle>
                  </FormRow>
                  <FormRow $height={35} $top={7}>
                    <FormLabel>Activer le sous-éc</FormLabel>
                    <Toggle><ToggleText>OFF</ToggleText><ToggleKnob /></Toggle>
                  </FormRow>
                  <StartButton>
                    <Shutter size={22} gap={ACTIVE} />
                  </StartButton>
                </AcquisitionForm>
                <Tooltip>Démarrer Expositions</Tooltip>
              </PanelBody>
            </Panel>
            <Panel $height={318}>
              <PanelHeader>
                Séquence
                <CloseX />
              </PanelHeader>
              <EmptyBody>
                <DishIcon />
              </EmptyBody>
            </Panel>
            <Panel>
              <PanelHeader>
                Historique Image
                <CloseX />
              </PanelHeader>
              <PanelBody />
            </Panel>
          </DockStack>
        </Dock>
        <BottomStrip />
      </Workspace>
    </Main>
  </Page>
);

export default App;
